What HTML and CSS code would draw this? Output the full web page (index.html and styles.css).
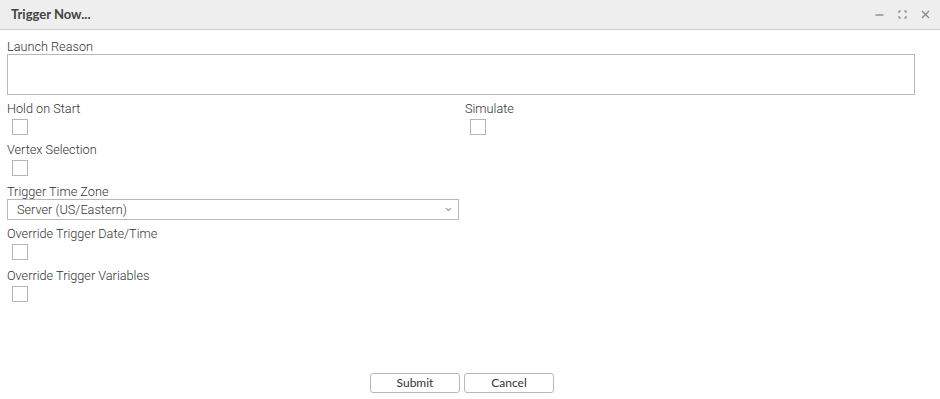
FILE: index.html
```html
<!DOCTYPE html>
<html>
<head>
<meta charset="utf-8">
<link rel="stylesheet" href="styles.css">
</head>
<body>
<div class="dialog">
  <div class="titlebar">
    <span class="title">Trigger Now...</span>
    <div class="tools">
      <svg class="ico" width="9" height="9" viewBox="0 0 9 9"><path d="M0.5 5h8" stroke="#8a8a8a" stroke-width="1.4" fill="none"/></svg>
      <svg class="ico" width="9" height="9" viewBox="0 0 9 9"><path d="M1 3V1h2M6 1h2v2M8 6v2H6M3 8H1V6" stroke="#8a8a8a" stroke-width="1.2" fill="none"/></svg>
      <svg class="ico" width="9" height="9" viewBox="0 0 9 9"><path d="M1 1l7 7M8 1l-7 7" stroke="#8a8a8a" stroke-width="1.3" fill="none"/></svg>
    </div>
  </div>
  <div class="body">
    <div class="field first">
      <div class="label">Launch Reason</div>
      <div class="textarea"></div>
    </div>
    <div class="cols">
      <div class="col">
        <div class="field tight">
          <div class="label">Hold on Start</div>
          <div class="check"></div>
        </div>
        <div class="field">
          <div class="label">Vertex Selection</div>
          <div class="check"></div>
        </div>
      </div>
      <div class="col">
        <div class="field">
          <div class="label">Simulate</div>
          <div class="check"></div>
        </div>
      </div>
    </div>
    <div class="field tz">
      <div class="label">Trigger Time Zone</div>
      <div class="select"><span>Server (US/Eastern)</span>
        <svg width="7" height="5" viewBox="0 0 7 5"><path d="M1 1.2l2.5 2.3L6 1.2" stroke="#999" stroke-width="1.1" fill="none"/></svg>
      </div>
    </div>
    <div class="field">
      <div class="label">Override Trigger Date/Time</div>
      <div class="check"></div>
    </div>
    <div class="field">
      <div class="label">Override Trigger Variables</div>
      <div class="check"></div>
    </div>
  </div>
  <div class="footer">
    <button class="btn">Submit</button>
    <button class="btn">Cancel</button>
  </div>
</div>
</body>
</html>
```
FILE: styles.css
```css
html, body {
  margin: 0;
  padding: 0;
  background: #fff;
}
.dialog {
  width: 940px;
  height: 399px;
  display: flex;
  flex-direction: column;
  font-family: Roboto, "Liberation Sans", sans-serif;
  font-size: 12.7px;
  color: #444;
}
.titlebar {
  height: 29px;
  background: #eeeeee;
  border-bottom: 1px solid #cfcfcf;
  display: flex;
  align-items: center;
  justify-content: space-between;
  padding: 0 10px 0 11px;
  flex: none;
}
.title {
  font-family: Lato, "Liberation Sans", sans-serif;
  font-weight: bold;
  font-size: 13px;
  color: #444;
  margin-top: -1px;
}
.tools {
  display: flex;
  gap: 14px;
  align-items: center;
  margin-top: -1px;
}
.ico { display: block; }
.body {
  padding: 9px 0 0 7px;
  display: flex;
  flex-direction: column;
  flex: 1;
}
.label {
  line-height: 15px;
  height: 15px;
  font-weight: 300;
  color: #333;
  white-space: nowrap;
}
.field {
  display: flex;
  flex-direction: column;
  margin-bottom: 8px;
}
.field.first { margin-bottom: 6px; }
.field.tight { margin-bottom: 7px; }
.textarea {
  width: 908px;
  height: 41px;
  box-sizing: border-box;
  border: 1px solid #b8b8b8;
}
.check {
  width: 16px;
  height: 16px;
  box-sizing: border-box;
  border: 1px solid #b5b5b5;
  margin: 3px 0 0 5px;
}
.cols {
  display: flex;
}
.col {
  width: 458px;
  display: flex;
  flex-direction: column;
}
.field.tz { margin-bottom: 6px; }
.select {
  width: 452px;
  height: 21px;
  box-sizing: border-box;
  border: 1px solid #b8b8b8;
  display: flex;
  align-items: center;
  justify-content: space-between;
  padding: 0 6px 0 9px;
  font-weight: 300;
  color: #333;
}
.footer {
  display: flex;
  justify-content: center;
  gap: 4px;
  padding: 0 16px 6px 0;
  flex: none;
}
.btn {
  width: 90px;
  height: 20px;
  box-sizing: border-box;
  border: 1px solid #b8b8b8;
  border-radius: 3px;
  background: #fff;
  font-family: Lato, "Liberation Sans", sans-serif;
  font-size: 12px;
  color: #333;
  padding: 0;
  line-height: 18px;
}
```
